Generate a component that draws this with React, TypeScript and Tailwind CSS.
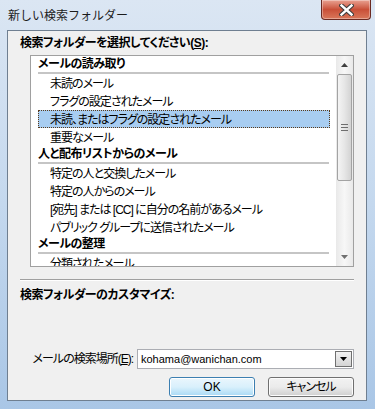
const sections = [
  {
    title: "メールの読み取り",
    items: [
      "未読のメール",
      "フラグの設定されたメール",
      "未読、またはフラグの設定されたメール",
      "重要なメール",
    ],
  },
  {
    title: "人と配布リストからのメール",
    items: [
      "特定の人と交換したメール",
      "特定の人からのメール",
      "[宛先] または [CC] に自分の名前があるメール",
      "パブリック グループに送信されたメール",
    ],
  },
  {
    title: "メールの整理",
    items: ["分類されたメール"],
  },
];

const SELECTED = "未読、またはフラグの設定されたメール";

const ScrollArrow = ({ up }: { up?: boolean }) => (
  <div className="h-[18px] flex items-center justify-center">
    <svg width="7" height="4" viewBox="0 0 7 4">
      {up ? <path d="M0 4 L3.5 0 L7 4 Z" fill="#404040" /> : <path d="M0 0 L3.5 4 L7 0 Z" fill="#707070" />}
    </svg>
  </div>
);

export default function App() {
  return (
    <div className="relative w-[375px] h-[409px] overflow-hidden bg-gradient-to-b from-[#dbe6f3] via-[#c4d8ee] to-[#a9c6e6] font-['Liberation_Sans','Noto_Sans_CJK_JP',sans-serif] text-[12px] text-black">
      {/* Title bar */}
      <div className="h-[30px] flex items-start pt-[7px] pl-[8px] text-[12px] leading-[16px] text-[#1b1b1b] font-['Noto_Sans_CJK_JP',sans-serif]">
        新しい検索フォルダー
      </div>
      <div className="absolute left-[321px] top-0 w-[50px] h-[20px] rounded-b-[4px] border border-t-0 border-[#6b2a22] bg-gradient-to-b from-[#e8a192] via-[#c94f38] to-[#d9775a] flex items-center justify-center shadow-[inset_0_0_0_1px_rgba(255,255,255,0.35)]">
        <svg width="15" height="12" viewBox="0 0 15 12">
          <path d="M2.5 1.5 L12.5 10.5 M12.5 1.5 L2.5 10.5" stroke="#3b3b3b" strokeWidth="4.5" strokeLinecap="square" />
          <path d="M2.5 1.5 L12.5 10.5 M12.5 1.5 L2.5 10.5" stroke="#ffffff" strokeWidth="2.4" strokeLinecap="square" />
        </svg>
      </div>

      {/* Client area */}
      <div className="ml-[7px] w-[360px] h-[371px] border border-[#6f7f91] bg-[#f0f0f0] flex flex-col [font-feature-settings:'palt'] tracking-[-1px]">
        <div className="pl-[12px] mt-[5px] h-[14px] leading-[14px] font-bold tracking-[-0.5px]">
          検索フォルダーを選択してください(<span className="underline">S</span>):
        </div>

        {/* List box */}
        <div className="ml-[22px] mt-[5px] w-[324px] h-[212px] border border-[#a0a0a0] bg-white flex">
          <div className="flex-1 overflow-hidden">
            {sections.map((s) => (
              <div key={s.title}>
                <div className="mx-[7px] h-[18px] border-b-2 border-[#c5c5c5] font-bold leading-[14px] pt-[1px] tracking-[-0.5px]">
                  {s.title}
                </div>
                {s.items.map((it) => (
                  <div
                    key={it}
                    className={
                      it === SELECTED
                        ? "ml-[7px] mr-[6px] h-[18px] pl-[12px] pt-[2px] leading-[16px] bg-[#a8cdf1] outline-1 outline-dotted outline-[#5a3a1a] -outline-offset-1"
                        : "ml-[7px] mr-[6px] h-[18px] pl-[12px] pt-[2px] leading-[16px]"
                    }
                  >
                    {it}
                  </div>
                ))}
              </div>
            ))}
          </div>
          {/* Scrollbar */}
          <div className="w-[17px] h-full flex flex-col bg-gradient-to-r from-[#e9e9e9] via-[#f7f7f7] to-[#e9e9e9]">
            <ScrollArrow up />
            <div className="mx-[1px] h-[107px] rounded-[2px] border border-[#a3a3a3] bg-gradient-to-r from-[#f4f4f4] via-[#e6e6e6] to-[#d3d3d3] flex flex-col items-center justify-center gap-[2px]">
              <div className="w-[7px] h-[1px] bg-[#6e6e6e]" />
              <div className="w-[7px] h-[1px] bg-[#6e6e6e]" />
              <div className="w-[7px] h-[1px] bg-[#6e6e6e]" />
            </div>
            <div className="flex-1" />
            <ScrollArrow />
          </div>
        </div>

        {/* Separator */}
        <div className="ml-[12px] mt-[12px] w-[334px] h-[2px] border-t border-[#a0a0a0] border-b border-b-white" />

        <div className="pl-[12px] mt-[7px] h-[14px] leading-[14px] font-bold tracking-[-0.5px]">
          検索フォルダーのカスタマイズ:
        </div>

        {/* Location */}
        <div className="mt-[47px] flex items-center">
          <div className="w-[129px] text-right pr-[4px] leading-[14px]">
            メールの検索場所(<span className="underline">E</span>):
          </div>
          <div className="w-[217px] h-[20px] border border-[#abadb3] bg-white flex items-center">
            <span className="flex-1 pl-[3px] leading-[14px] text-[11px] tracking-normal">kohama@wanichan.com</span>
            <div className="mr-[1px] w-[17px] h-[16px] border border-[#707070] bg-gradient-to-b from-[#f2f2f2] to-[#d4d4d4] flex items-center justify-center">
              <svg width="7" height="4" viewBox="0 0 7 4">
                <path d="M0 0 L3.5 4 L7 0 Z" fill="#000" />
              </svg>
            </div>
          </div>
        </div>

        {/* Buttons */}
        <div className="mt-[8px] flex gap-[13px] pl-[161px]">
          <button className="w-[86px] h-[20px] rounded-[3px] border border-[#3c7fb1] bg-gradient-to-b from-[#eaf6fd] via-[#d9f0fc] to-[#a7d9f5] leading-[14px] text-[12px] tracking-normal shadow-[inset_0_0_0_1px_#fff]">
            OK
          </button>
          <button className="w-[86px] h-[20px] rounded-[3px] border border-[#707070] bg-gradient-to-b from-[#f2f2f2] via-[#ebebeb] to-[#cfcfcf] leading-[14px] text-[12px] shadow-[inset_0_0_0_1px_#fcfcfc]">
            キャンセル
          </button>
        </div>
      </div>
    </div>
  );
}
